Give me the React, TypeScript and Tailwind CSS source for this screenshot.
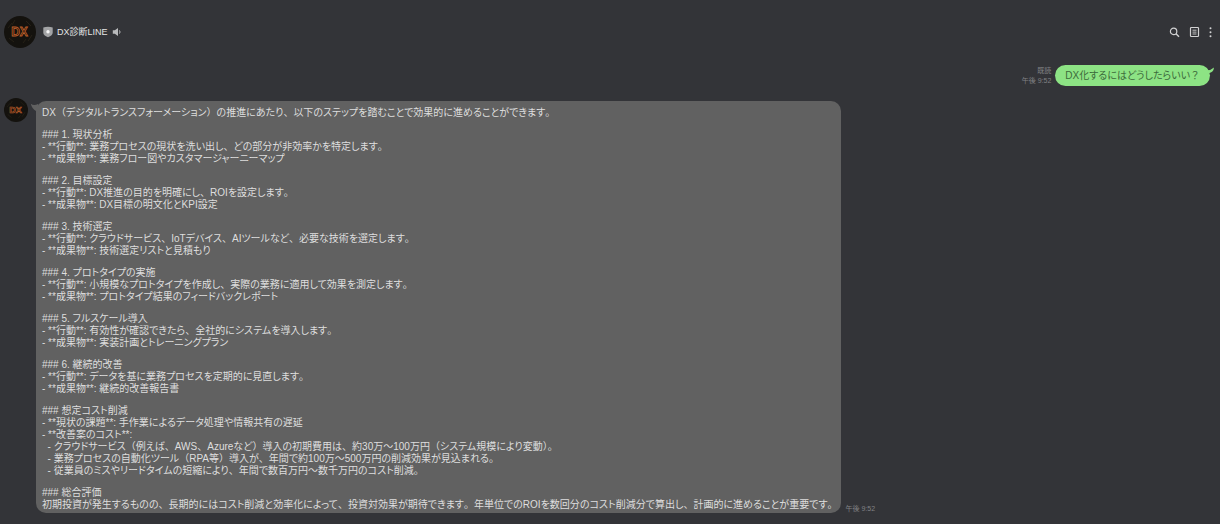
import { clsx } from "clsx";

type Section = {
  title: string;
  lines: string[];
};

const INTRO =
  "DX（デジタルトランスフォーメーション）の推進にあたり、以下のステップを踏むことで効果的に進めることができます。";

const SECTIONS: Section[] = [
  {
    title: "### 1. 現状分析",
    lines: [
      "- **行動**: 業務プロセスの現状を洗い出し、どの部分が非効率かを特定します。",
      "- **成果物**: 業務フロー図やカスタマージャーニーマップ",
    ],
  },
  {
    title: "### 2. 目標設定",
    lines: [
      "- **行動**: DX推進の目的を明確にし、ROIを設定します。",
      "- **成果物**: DX目標の明文化とKPI設定",
    ],
  },
  {
    title: "### 3. 技術選定",
    lines: [
      "- **行動**: クラウドサービス、IoTデバイス、AIツールなど、必要な技術を選定します。",
      "- **成果物**: 技術選定リストと見積もり",
    ],
  },
  {
    title: "### 4. プロトタイプの実施",
    lines: [
      "- **行動**: 小規模なプロトタイプを作成し、実際の業務に適用して効果を測定します。",
      "- **成果物**: プロトタイプ結果のフィードバックレポート",
    ],
  },
  {
    title: "### 5. フルスケール導入",
    lines: [
      "- **行動**: 有効性が確認できたら、全社的にシステムを導入します。",
      "- **成果物**: 実装計画とトレーニングプラン",
    ],
  },
  {
    title: "### 6. 継続的改善",
    lines: [
      "- **行動**: データを基に業務プロセスを定期的に見直します。",
      "- **成果物**: 継続的改善報告書",
    ],
  },
  {
    title: "### 想定コスト削減",
    lines: [
      "- **現状の課題**: 手作業によるデータ処理や情報共有の遅延",
      "- **改善案のコスト**:",
      "  - クラウドサービス（例えば、AWS、Azureなど）導入の初期費用は、約30万〜100万円（システム規模により変動）。",
      "  - 業務プロセスの自動化ツール（RPA等）導入が、年間で約100万〜500万円の削減効果が見込まれる。",
      "  - 従業員のミスやリードタイムの短縮により、年間で数百万円〜数千万円のコスト削減。",
    ],
  },
  {
    title: "### 総合評価",
    lines: [
      "初期投資が発生するものの、長期的にはコスト削減と効率化によって、投資対効果が期待できます。年単位でのROIを数回分のコスト削減分で算出し、計画的に進めることが重要です。",
    ],
  },
];

/** Proportional kana, but punctuation and brackets keep their full width. */
function Japanese({ text }: { text: string }) {
  return text.split(/([、。（）？]+)/).map((part, i) =>
    i % 2 === 1 ? (
      <span key={i} className="[font-feature-settings:normal]">
        {part}
      </span>
    ) : (
      part
    ),
  );
}

function Avatar({ className }: { className?: string }) {
  return (
    <svg viewBox="0 0 32 32" className={clsx("shrink-0", className)} role="img" aria-label="DX診断LINE">
      <circle cx="16" cy="16" r="16" fill="#14120e" />
      <path d="M5 22l5 4M22 5l5 5M4 12l4-5M24 25l4-6M11 4l-3 5M19 27l3-4" stroke="#262117" strokeWidth="1" />
      <text
        x="15.5"
        y="20"
        textAnchor="middle"
        fontFamily="Liberation Sans, sans-serif"
        fontWeight="700"
        fontSize="12"
        fill="#241408"
        stroke="#bb5f2b"
        strokeWidth="0.8"
      >
        DX
      </text>
    </svg>
  );
}

function ShieldIcon() {
  return (
    <svg viewBox="0 0 10 12" className="h-3 w-2.5" aria-hidden="true">
      <path d="M0.3 1.4Q5 0.2 9.7 1.4V6.5Q9.7 9.6 5 11.2Q0.3 9.6 0.3 6.5Z" fill="#a3a4a6" />
      <circle cx="5" cy="5.7" r="1.7" fill="#f4f4f4" />
    </svg>
  );
}

function SpeakerIcon() {
  return (
    <svg viewBox="0 0 10 10" className="size-2.5" aria-hidden="true">
      <path d="M0.8 3.2H2.8L6 1V9L2.8 6.8H0.8Z" fill="#b9babc" />
      <path d="M7.4 3.4Q8.8 5 7.4 6.6" fill="none" stroke="#b9babc" strokeWidth="1" />
    </svg>
  );
}

function SearchIcon() {
  return (
    <svg viewBox="0 0 12 12" className="size-3" fill="none" stroke="#d2d2d3" aria-hidden="true">
      <circle cx="5.6" cy="5.4" r="3.2" strokeWidth="1.2" />
      <path d="M8 7.8L11 10.8" strokeWidth="1.4" />
    </svg>
  );
}

function NoteIcon() {
  return (
    <svg viewBox="0 0 12 12" className="size-3" fill="none" stroke="#d2d2d3" aria-hidden="true">
      <rect x="2.5" y="1.5" width="8" height="9" rx="0.8" strokeWidth="1.2" />
      <path d="M4.5 4.2H8.5M4.5 6.1H8.5M4.5 8H8.5" strokeWidth="0.9" />
    </svg>
  );
}

function MoreIcon() {
  return (
    <svg viewBox="0 0 4 12" className="h-3 w-1" fill="#d2d2d3" aria-hidden="true">
      <circle cx="2.5" cy="2.3" r="1" />
      <circle cx="2.5" cy="6.3" r="1" />
      <circle cx="2.5" cy="10.3" r="1" />
    </svg>
  );
}

function Header() {
  return (
    <header className="flex items-center pt-4 pr-2 pl-1">
      <Avatar className="size-8" />
      <div className="ml-[7px] flex items-center gap-1">
        <ShieldIcon />
        <h1 className="text-[9px] leading-3 text-[#e4e4e5]">DX診断LINE</h1>
        <SpeakerIcon />
      </div>
      <div className="ml-auto flex items-center gap-2">
        <button type="button" aria-label="検索">
          <SearchIcon />
        </button>
        <button type="button" aria-label="ノート">
          <NoteIcon />
        </button>
        <button type="button" aria-label="メニュー">
          <MoreIcon />
        </button>
      </div>
    </header>
  );
}

function SentMessage() {
  return (
    <div className="mt-[17px] flex items-end justify-end gap-1 pr-2.5">
      <p className="text-right text-[7px] leading-[10px] text-[#808184]">
        既読
        <br />
        午後 9:52
      </p>
      <div className="relative rounded-[11px] bg-[#8de384] px-2.5 pt-[5px] pb-1 text-[10px] leading-3 text-[#3c6a3b]">
        <Japanese text="DX化するにはどうしたらいい？" />
        <svg viewBox="0 0 10 8" className="absolute top-0.5 -right-1 h-2 w-2.5" aria-hidden="true">
          <path d="M0 2.5Q5 4.8 10 0.5Q9.5 5 5.5 6L0 8Z" fill="#8de384" />
        </svg>
      </div>
    </div>
  );
}

function ReceivedMessage() {
  return (
    <div className="mt-3 flex items-start pl-1">
      <Avatar className="size-6" />
      <div className="mt-[3px] ml-2 flex min-w-0 items-end gap-1">
        <div className="relative flex flex-col gap-2.5 rounded-[10px] bg-[#616161] pt-1.5 pr-1 pb-0.5 pl-1.5 text-[10px] leading-3 text-[#dedede]">
          <svg viewBox="0 0 10 8" className="absolute top-0.5 -left-1.5 h-2 w-2.5" aria-hidden="true">
            <path d="M0.8 0.8Q4 3.2 8 1L10 8H6Q2 6 0.8 0.8Z" fill="#616161" />
          </svg>
          <p>
            <Japanese text={INTRO} />
          </p>
          {SECTIONS.map((section) => (
            <div key={section.title} className="whitespace-pre-wrap">
              <p>{section.title}</p>
              {section.lines.map((line) => (
                <p key={line}>
                  <Japanese text={line} />
                </p>
              ))}
            </div>
          ))}
        </div>
        <p className="shrink-0 text-[7px] leading-2 text-[#808184]">午後 9:52</p>
      </div>
    </div>
  );
}

export default function App() {
  return (
    <main
      lang="ja"
      className="min-h-screen bg-[#333438] font-['Liberation_Sans','Noto_Sans_CJK_JP',sans-serif] [font-feature-settings:'palt']"
    >
      <Header />
      <SentMessage />
      <ReceivedMessage />
    </main>
  );
}
